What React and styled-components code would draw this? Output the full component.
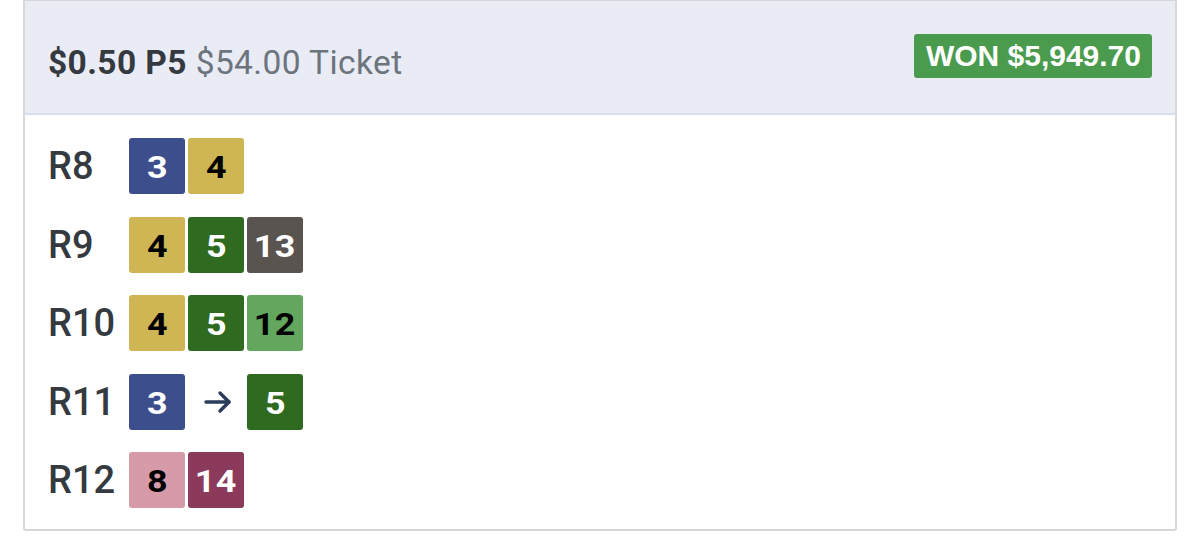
import React from "react";
import styled, { createGlobalStyle } from "styled-components";

const GlobalStyle = createGlobalStyle`
  body {
    margin: 0;
    background: #fff;
    font-family: Roboto, "Noto Sans", sans-serif;
  }
`;

const races = [
  { name: "R8", picks: [{ n: 3, c: "blue" }, { n: 4, c: "gold" }] },
  { name: "R9", picks: [{ n: 4, c: "gold" }, { n: 5, c: "green" }, { n: 13, c: "grey" }] },
  { name: "R10", picks: [{ n: 4, c: "gold" }, { n: 5, c: "green" }, { n: 12, c: "lime" }] },
  { name: "R11", picks: [{ n: 3, c: "blue" }, { arrow: true }, { n: 5, c: "green" }] },
  { name: "R12", picks: [{ n: 8, c: "pink" }, { n: 14, c: "wine" }] },
];

const palette = {
  blue: { bg: "#3d4e8c", fg: "#fff" },
  gold: { bg: "#cfb654", fg: "#000" },
  green: { bg: "#2e6a1f", fg: "#fff" },
  grey: { bg: "#5a5451", fg: "#fff" },
  lime: { bg: "#63a65e", fg: "#000" },
  pink: { bg: "#d79aa9", fg: "#000" },
  wine: { bg: "#8b3a5b", fg: "#fff" },
};

const Arrow = () => (
  <svg width="30" height="24" viewBox="0 0 30 24" fill="none" stroke="#2a3d5c" strokeWidth="3.4" strokeLinecap="round" strokeLinejoin="round">
    <path d="M3 12h23" />
    <path d="M17 3l9 9-9 9" />
  </svg>
);

export default function App() {
  return (
    <>
      <GlobalStyle />
      <Card>
        <Header>
          <Title>
            <strong>$0.50 P5</strong> <Muted>$54.00 Ticket</Muted>
          </Title>
          <WonBadge>WON $5,949.70</WonBadge>
        </Header>
        <Body>
          {races.map((race) => (
            <Row key={race.name}>
              <RaceLabel>{race.name}</RaceLabel>
              <Picks>
                {race.picks.map((p, i) =>
                  p.arrow ? (
                    <ArrowSlot key={i}>
                      <Arrow />
                    </ArrowSlot>
                  ) : (
                    <Runner key={i} $bg={palette[p.c].bg} $fg={palette[p.c].fg}>
                      <RunnerNum>{p.n}</RunnerNum>
                    </Runner>
                  )
                )}
              </Picks>
            </Row>
          ))}
        </Body>
      </Card>
    </>
  );
}

const Card = styled.div`
  margin-left: 23px;
  width: 1154px;
  box-sizing: border-box;
  border: 2px solid #d7d7d9;
  border-top-width: 1px;
  border-radius: 0 0 3px 3px;
  background: #fff;
`;

const Header = styled.div`
  height: 114px;
  box-sizing: border-box;
  padding: 0 23px;
  display: flex;
  align-items: center;
  justify-content: space-between;
  background: #e9ecf5;
  border-bottom: 2px solid #d9deec;
`;

const Title = styled.div`
  font-size: 33.5px;
  letter-spacing: 0.4px;
  color: #343a40;
  padding-top: 11px;

  strong {
    font-weight: 700;
  }
`;

const Muted = styled.span`
  color: #6c747d;
  font-weight: 400;
`;

const WonBadge = styled.span`
  display: inline-flex;
  align-items: center;
  height: 44px;
  padding: 0 11px 0 12px;
  margin-top: -2px;
  border-radius: 3px;
  background: #4a9b4e;
  color: #fff;
  font-family: "Liberation Sans", Arial, sans-serif;
  font-weight: 700;
  font-size: 30px;
`;

const Body = styled.div`
  padding: 23px 22px 21px;
  display: flex;
  flex-direction: column;
  gap: 22.5px;
`;

const Row = styled.div`
  display: flex;
  align-items: center;
  height: 56px;
`;

const RaceLabel = styled.div`
  width: 81px;
  font-size: 38px;
  font-weight: 500;
  color: #343a40;
  line-height: 1;
  margin-left: 1px;
`;

const Picks = styled.div`
  display: flex;
  gap: 3px;
`;

const Runner = styled.div`
  width: 56px;
  height: 56px;
  border-radius: 3px;
  display: flex;
  align-items: center;
  justify-content: center;
  background: ${(p) => p.$bg};
  color: ${(p) => p.$fg};
  font-size: 32px;
  font-weight: 700;
`;

const RunnerNum = styled.span`
  display: inline-block;
  transform: scaleX(1.12);
  letter-spacing: 0.3px;
  margin-top: 2px;
`;

const ArrowSlot = styled.div`
  width: 56px;
  height: 56px;
  display: flex;
  align-items: center;
  justify-content: center;
  padding-left: 3px;
  box-sizing: border-box;
`;
